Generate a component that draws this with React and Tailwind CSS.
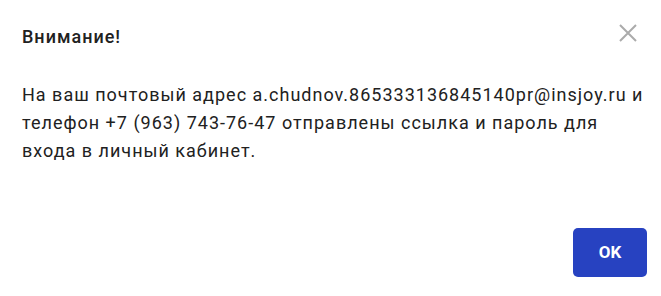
import React from 'react';

export default function App() {
  return (
    <div className="w-[661px] h-[296px] bg-white font-['Roboto',sans-serif] text-[#212121] flex flex-col">
      <div className="flex items-start justify-between pl-[22px] pr-[24px] pt-[24px]">
        <h2 className="text-[18px] leading-[26px] font-medium tracking-[1px]">Внимание!</h2>
        <button className="mt-0 text-[#ababab]">
          <svg width="18" height="18" viewBox="0 0 18 18" fill="none" stroke="currentColor" strokeWidth="2">
            <path d="M1 1L17 17M17 1L1 17" />
          </svg>
        </button>
      </div>

      <p className="pl-[22px] pr-[12px] pt-[31px] text-[18px] leading-[28px] tracking-[1px]">
        На ваш почтовый адрес a.chudnov.865333136845140pr@insjoy.ru и телефон +7 (963) 743-76-47 отправлены ссылка и пароль для входа в личный кабинет.
      </p>

      <div className="mt-auto flex justify-end pr-[14px] pb-[19px]">
        <button className="w-[74px] h-[49px] rounded-[5px] bg-[#2742c1] text-white text-[17px] font-bold">
          OK
        </button>
      </div>
    </div>
  );
}
